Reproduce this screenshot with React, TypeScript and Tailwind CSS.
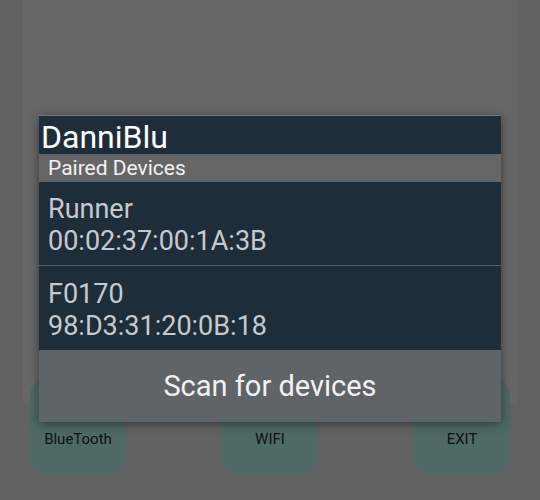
const devices = [
  { name: "Runner", mac: "00:02:37:00:1A:3B" },
  { name: "F0170", mac: "98:D3:31:20:0B:18" },
];

function DimButton({ label }: { label: string }) {
  return (
    <div className="w-[96px] h-[96px] rounded-[18px] bg-[#4e6966] flex items-end justify-center pb-[27px]">
      <span className="text-[15px] text-[#111] leading-none">{label}</span>
    </div>
  );
}

export default function App() {
  return (
    <div
      className="relative w-[540px] h-[500px] overflow-hidden bg-[#626262]"
      style={{ fontFamily: "Roboto, 'Liberation Sans', sans-serif" }}
    >
      {/* dimmed activity behind the dialog */}
      <div className="mx-[23px] h-[403px] bg-[#676767]" />
      <div className="-mt-[25px] flex justify-between px-[30px]">
        <DimButton label="BlueTooth" />
        <DimButton label="WIFI" />
        <DimButton label="EXIT" />
      </div>

      {/* dialog */}
      <div className="absolute left-[39px] top-[115px] w-[462px] flex flex-col shadow-[0_2px_10px_rgba(0,0,0,0.45)] border-t border-[#6f7b84]">
        <div className="h-[38px] bg-[#1e2d3a] flex items-end px-[2px]">
          <span className="text-[32px] leading-none text-white pb-[1px]">DanniBlu</span>
        </div>
        <div className="h-[28px] bg-[#666666] flex items-center px-[9px]">
          <span className="text-[21px] leading-none text-[#f2f2f2]">Paired Devices</span>
        </div>
        {devices.map((d, i) => (
          <div
            key={d.mac}
            className={
              "h-[84px] bg-[#1e2d3a] flex flex-col justify-center px-[9px] pt-[3px] text-[27px] leading-[32px] text-[#c5cacf] " +
              (i === 0 ? "border-b border-[#56636d]" : "")
            }
          >
            <span>{d.name}</span>
            <span>{d.mac}</span>
          </div>
        ))}
        <div className="h-[72px] bg-[#5f6469] flex items-center justify-center">
          <span className="text-[29px] leading-none text-[#f2f2f2]">Scan for devices</span>
        </div>
      </div>
    </div>
  );
}
